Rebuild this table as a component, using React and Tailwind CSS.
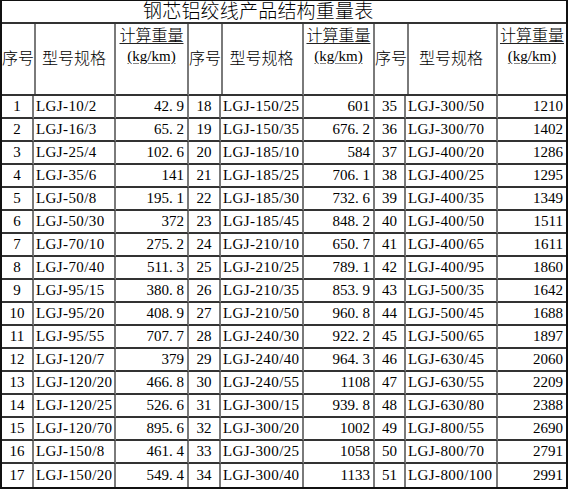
const ROWS = [
  ['1', 'LGJ-10/2', '42.9', '18', 'LGJ-150/25', '601', '35', 'LGJ-300/50', '1210'],
  ['2', 'LGJ-16/3', '65.2', '19', 'LGJ-150/35', '676.2', '36', 'LGJ-300/70', '1402'],
  ['3', 'LGJ-25/4', '102.6', '20', 'LGJ-185/10', '584', '37', 'LGJ-400/20', '1286'],
  ['4', 'LGJ-35/6', '141', '21', 'LGJ-185/25', '706.1', '38', 'LGJ-400/25', '1295'],
  ['5', 'LGJ-50/8', '195.1', '22', 'LGJ-185/30', '732.6', '39', 'LGJ-400/35', '1349'],
  ['6', 'LGJ-50/30', '372', '23', 'LGJ-185/45', '848.2', '40', 'LGJ-400/50', '1511'],
  ['7', 'LGJ-70/10', '275.2', '24', 'LGJ-210/10', '650.7', '41', 'LGJ-400/65', '1611'],
  ['8', 'LGJ-70/40', '511.3', '25', 'LGJ-210/25', '789.1', '42', 'LGJ-400/95', '1860'],
  ['9', 'LGJ-95/15', '380.8', '26', 'LGJ-210/35', '853.9', '43', 'LGJ-500/35', '1642'],
  ['10', 'LGJ-95/20', '408.9', '27', 'LGJ-210/50', '960.8', '44', 'LGJ-500/45', '1688'],
  ['11', 'LGJ-95/55', '707.7', '28', 'LGJ-240/30', '922.2', '45', 'LGJ-500/65', '1897'],
  ['12', 'LGJ-120/7', '379', '29', 'LGJ-240/40', '964.3', '46', 'LGJ-630/45', '2060'],
  ['13', 'LGJ-120/20', '466.8', '30', 'LGJ-240/55', '1108', '47', 'LGJ-630/55', '2209'],
  ['14', 'LGJ-120/25', '526.6', '31', 'LGJ-300/15', '939.8', '48', 'LGJ-630/80', '2388'],
  ['15', 'LGJ-120/70', '895.6', '32', 'LGJ-300/20', '1002', '49', 'LGJ-800/55', '2690'],
  ['16', 'LGJ-150/8', '461.4', '33', 'LGJ-300/25', '1058', '50', 'LGJ-800/70', '2791'],
  ['17', 'LGJ-150/20', '549.4', '34', 'LGJ-300/40', '1133', '51', 'LGJ-800/100', '2991'],
];

const FONT = "font-['Liberation_Serif','Noto_Sans_CJK_SC',serif]";

// SimSun-style half-width period: give the dot a full digit cell
function Num({ value }) {
  const [a, b] = value.split('.');
  if (b === undefined) return <>{a}</>;
  return (
    <>
      {a}
      <span className="inline-block w-[7.5px] text-left">.</span>
      {b}
    </>
  );
}

function HeadCell({ kind, last }) {
  const edge = last ? '' : 'border-r-2';
  if (kind === 'no') {
    return (
      <div className={`${edge} border-[#7a7a7a] border-b-2 border-b-[#333] flex items-center justify-center text-[16px] font-light whitespace-nowrap`}>
        序号
      </div>
    );
  }
  if (kind === 'spec') {
    return (
      <div className={`${edge} border-[#7a7a7a] border-b-2 border-b-[#333] flex items-center justify-center text-[16px] font-light whitespace-nowrap`}>
        型号规格
      </div>
    );
  }
  return (
    <div className={`${edge} border-[#7a7a7a] border-b-2 border-b-[#333] flex flex-col items-center pt-[2px] whitespace-nowrap`}>
      <span className="text-[16px] leading-[19px] font-light underline decoration-[#222] underline-offset-2">计算重量</span>
      <span className="text-[15px] leading-[17px] mt-[3px] underline decoration-[#888] underline-offset-2">(kg/km)</span>
    </div>
  );
}

export default function App() {
  return (
    <div className={`bg-white min-h-screen text-black ${FONT}`}>
      <div className="w-fit border-l-2 border-r-2 border-t border-b-2 border-[#111]">
        <div className="h-[23px] border-b-2 border-[#333] pl-[141px] text-[19px] leading-[21px] font-light tracking-[0.2px] whitespace-nowrap">
          钢芯铝绞线产品结构重量表
        </div>

        <div className="grid grid-cols-[32px_82px_73px_32px_83px_71px_31px_92px_68px]">
          {['no', 'spec', 'wt', 'no', 'spec', 'wt', 'no', 'spec', 'wt'].map((k, i) => (
            <div key={i} className="h-[72px] grid">
              <HeadCell kind={k} last={i === 8} />
            </div>
          ))}

          {ROWS.map((row, r) => {
            const lastRow = r === ROWS.length - 1;
            return row.map((v, c) => {
              const col = c % 3;
              const lastCol = c === 8;
              const base = `h-[23px] flex items-center whitespace-nowrap text-[15px] ${
                lastCol ? '' : 'border-r-2 border-r-[#7a7a7a]'
              } ${lastRow ? '' : 'border-b-2 border-b-[#333]'}`;
              if (col === 0) {
                return <div key={`${r}-${c}`} className={`${base} justify-center`}>{v}</div>;
              }
              if (col === 1) {
                return <div key={`${r}-${c}`} className={`${base} pl-[2px] tracking-[0.4px]`}>{v}</div>;
              }
              return (
                <div key={`${r}-${c}`} className={`${base} justify-end pr-[3px]`}>
                  <Num value={v} />
                </div>
              );
            });
          })}
        </div>
      </div>
    </div>
  );
}
